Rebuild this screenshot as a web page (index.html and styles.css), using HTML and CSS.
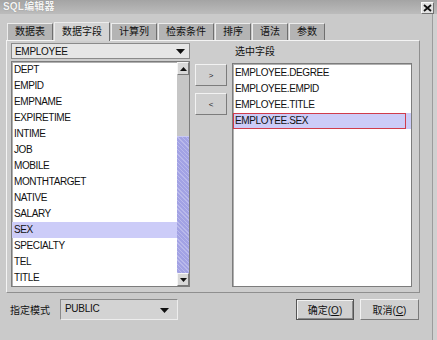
FILE: index.html
```html
<!DOCTYPE html>
<html lang="zh">
<head>
  <meta charset="UTF-8">
  <title>SQL编辑器</title>
  <link rel="stylesheet" href="styles.css">
</head>
<body>
  <div class="window">
    <!-- Title bar -->
    <div class="titlebar">
      <span class="title">SQL编辑器</span>
      <span class="close">
        <svg width="9" height="8" viewBox="0 0 9 8"><path d="M1 1 L8 7 M8 1 L1 7" stroke="#111" stroke-width="1.8"/></svg>
      </span>
    </div>

    <div class="frame">
      <!-- Tabs -->
      <div class="tabs">
        <div class="tab">数据表</div>
        <div class="tab active">数据字段</div>
        <div class="tab">计算列</div>
        <div class="tab">检索条件</div>
        <div class="tab">排序</div>
        <div class="tab">语法</div>
        <div class="tab">参数</div>
      </div>

      <div class="panel">
        <!-- Table fields -->
        <div class="col col-left">
          <div class="combo combo-table">
            <span>EMPLOYEE</span>
            <svg class="arrow" width="9" height="5" viewBox="0 0 9 5"><polygon points="0,0 9,0 4.5,5" fill="#111"/></svg>
          </div>
          <div class="list list-left">
            <ul class="items">
              <li>DEPT</li>
              <li>EMPID</li>
              <li>EMPNAME</li>
              <li>EXPIRETIME</li>
              <li>INTIME</li>
              <li>JOB</li>
              <li>MOBILE</li>
              <li>MONTHTARGET</li>
              <li>NATIVE</li>
              <li>SALARY</li>
              <li class="selected">SEX</li>
              <li>SPECIALTY</li>
              <li>TEL</li>
              <li>TITLE</li>
            </ul>
            <div class="scrollbar">
              <div class="sb-btn">
                <svg width="7" height="4" viewBox="0 0 7 4"><polygon points="0,4 7,4 3.5,0" fill="#111"/></svg>
              </div>
              <div class="track"><div class="thumb"></div></div>
              <div class="sb-btn">
                <svg width="7" height="4" viewBox="0 0 7 4"><polygon points="0,0 7,0 3.5,4" fill="#111"/></svg>
              </div>
            </div>
          </div>
        </div>

        <!-- Move buttons -->
        <div class="col col-mid">
          <button class="move-btn">&gt;</button>
          <button class="move-btn">&lt;</button>
        </div>

        <!-- Selected fields -->
        <div class="col col-right">
          <div class="label">选中字段</div>
          <div class="list list-right">
            <ul class="items">
              <li>EMPLOYEE.DEGREE</li>
              <li>EMPLOYEE.EMPID</li>
              <li>EMPLOYEE.TITLE</li>
              <li class="selected"><span class="marked">EMPLOYEE.SEX</span></li>
            </ul>
          </div>
        </div>
      </div>

      <!-- Footer -->
      <div class="footer">
        <span class="footer-label">指定模式</span>
        <div class="combo combo-schema">
          <span>PUBLIC</span>
          <svg class="arrow" width="9" height="5" viewBox="0 0 9 5"><polygon points="0,0 9,0 4.5,5" fill="#111"/></svg>
        </div>
        <div class="actions">
          <button class="btn btn-default">确定(<u>O</u>)</button>
          <button class="btn">取消(<u>C</u>)</button>
        </div>
      </div>
    </div>
  </div>
</body>
</html>
```

FILE: styles.css
```css
body {
  margin: 0;
  padding: 0;
  background-color: #cfcfcf;
  font-family: "Liberation Sans", "Noto Sans CJK SC", sans-serif;
  font-size: 10px;
  color: #111;
}
.window {
  width: 437px;
  height: 340px;
  overflow: hidden;
  background-color: #d0d0d0;
}
.titlebar {
  height: 14px;
  display: flex;
  justify-content: space-between;
  align-items: flex-start;
  padding: 0 3px 0 3px;
  background: linear-gradient(#a4a4a4, #bcbcbc);
}
.title {
  color: #f4f4f4;
  font-weight: bold;
  font-size: 10px;
  line-height: 13px;
  letter-spacing: 0.2px;
  text-shadow: 0 0 1px #777;
}
.close {
  width: 11px;
  height: 10px;
  margin-top: 2px;
  display: flex;
  align-items: center;
  justify-content: center;
  background-color: #e2e2e2;
  border: 1px solid;
  border-color: #fafafa #707070 #707070 #fafafa;
}
.frame {
  width: 432px;
  height: 326px;
  background-color: #cacaca;
  border-right: 1px solid #9c9c9c;
}
.tabs {
  display: flex;
  align-items: flex-end;
  gap: 1px;
  height: 26px;
  padding-left: 7px;
}
.tab {
  height: 16px;
  line-height: 16px;
  padding: 0 7px;
  background-color: #b4b4b4;
  border: 1px solid;
  border-color: #ececec #6f6f6f transparent #ececec;
  border-bottom: none;
  font-size: 10px;
}
.tab.active {
  height: 18px;
  line-height: 18px;
  background-color: #d4d4d4;
  position: relative;
  top: 1px;
}
.panel {
  margin-left: 6px;
  width: 414px;
  height: 253px;
  box-sizing: border-box;
  border: 1px solid;
  border-color: #f4f4f4 #8f8f8f #8f8f8f #f4f4f4;
  padding: 2px 0 0 4px;
  display: flex;
  background-color: #cdcdcd;
}
.col {
  display: flex;
  flex-direction: column;
}
.col-left {
  width: 179px;
}
.col-mid {
  width: 42px;
  box-sizing: border-box;
  padding: 21px 0 0 5px;
  gap: 7px;
}
.col-right {
  width: 180px;
}
.combo {
  display: flex;
  align-items: center;
  justify-content: space-between;
  box-sizing: border-box;
  border: 1px solid #8a8a8a;
  letter-spacing: -0.3px;
}
.combo-table {
  height: 16px;
  padding: 0 4px 0 3px;
  background-color: #e6e6e6;
  margin-bottom: 2px;
}
.list {
  display: flex;
  background-color: #fff;
  border: 1px solid #7c7c7c;
  box-shadow: inset 1px 1px 0 #b0b0b0;
}
.list-left {
  height: 226px;
  box-sizing: border-box;
}
.list-right {
  height: 224px;
  box-sizing: border-box;
}
.items {
  list-style: none;
  margin: 0;
  padding: 0;
  flex: 1;
}
.items li {
  height: 16px;
  line-height: 16px;
  padding-left: 2px;
  letter-spacing: -0.4px;
  white-space: nowrap;
}
.list-right .items {
  padding-top: 1px;
}
.items li.selected {
  background-color: #ccccf8;
}
.marked {
  display: block;
  width: 173px;
  height: 16px;
  box-sizing: border-box;
  margin-left: -2px;
  padding-left: 1px;
  line-height: 14px;
  border: 1px solid #d03c4c;
}
.scrollbar {
  width: 12px;
  display: flex;
  flex-direction: column;
  background-color: #c6c6c6;
}
.sb-btn {
  height: 13px;
  box-sizing: border-box;
  display: flex;
  align-items: center;
  justify-content: center;
  background-color: #d8d8d8;
  border: 1px solid;
  border-color: #f6f6f6 #7a7a7a #7a7a7a #f6f6f6;
}
.track {
  flex: 1;
  display: flex;
  flex-direction: column;
  padding-top: 61px;
}
.thumb {
  flex: 1;
  background-color: #a2a2e4;
  background-image: repeating-linear-gradient(45deg, rgba(255, 255, 255, 0.25) 0 1px, transparent 1px 3px);
  border-top: 1px solid #c8c8f4;
}
.move-btn {
  width: 32px;
  height: 22px;
  padding: 0;
  font-family: "Liberation Sans", sans-serif;
  font-size: 8px;
  background-color: #cfcfcf;
  border: 1px solid;
  border-color: #f2f2f2 #7c7c7c #7c7c7c #f2f2f2;
  color: #222;
}
.label {
  height: 20px;
  line-height: 18px;
  padding-left: 3px;
  font-size: 10px;
}
.footer {
  display: flex;
  align-items: center;
  height: 21px;
  margin-top: 6px;
  padding: 0 13px 0 10px;
}
.footer-label {
  width: 50px;
  font-size: 10px;
}
.combo-schema {
  width: 118px;
  height: 21px;
  padding: 0 8px 0 4px;
  align-items: flex-start;
  padding-top: 3px;
  background-color: #d3d3d3;
  border-color: #8a8a8a #ededed #ededed #8a8a8a;
}
.combo-schema .arrow {
  margin-top: 5px;
}
.actions {
  margin-left: auto;
  display: flex;
  gap: 6px;
}
.btn {
  height: 21px;
  width: 59px;
  padding: 0;
  font-family: "Liberation Sans", "Noto Sans CJK SC", sans-serif;
  font-size: 10px;
  color: #111;
  background-color: #d0d0d0;
  border: 1px solid;
  border-color: #f2f2f2 #7a7a7a #7a7a7a #f2f2f2;
}
.btn-default {
  width: 58px;
  border: 1px solid #555;
  box-shadow: inset 1px 1px 0 #f2f2f2, inset -1px -1px 0 #8a8a8a;
}
```
